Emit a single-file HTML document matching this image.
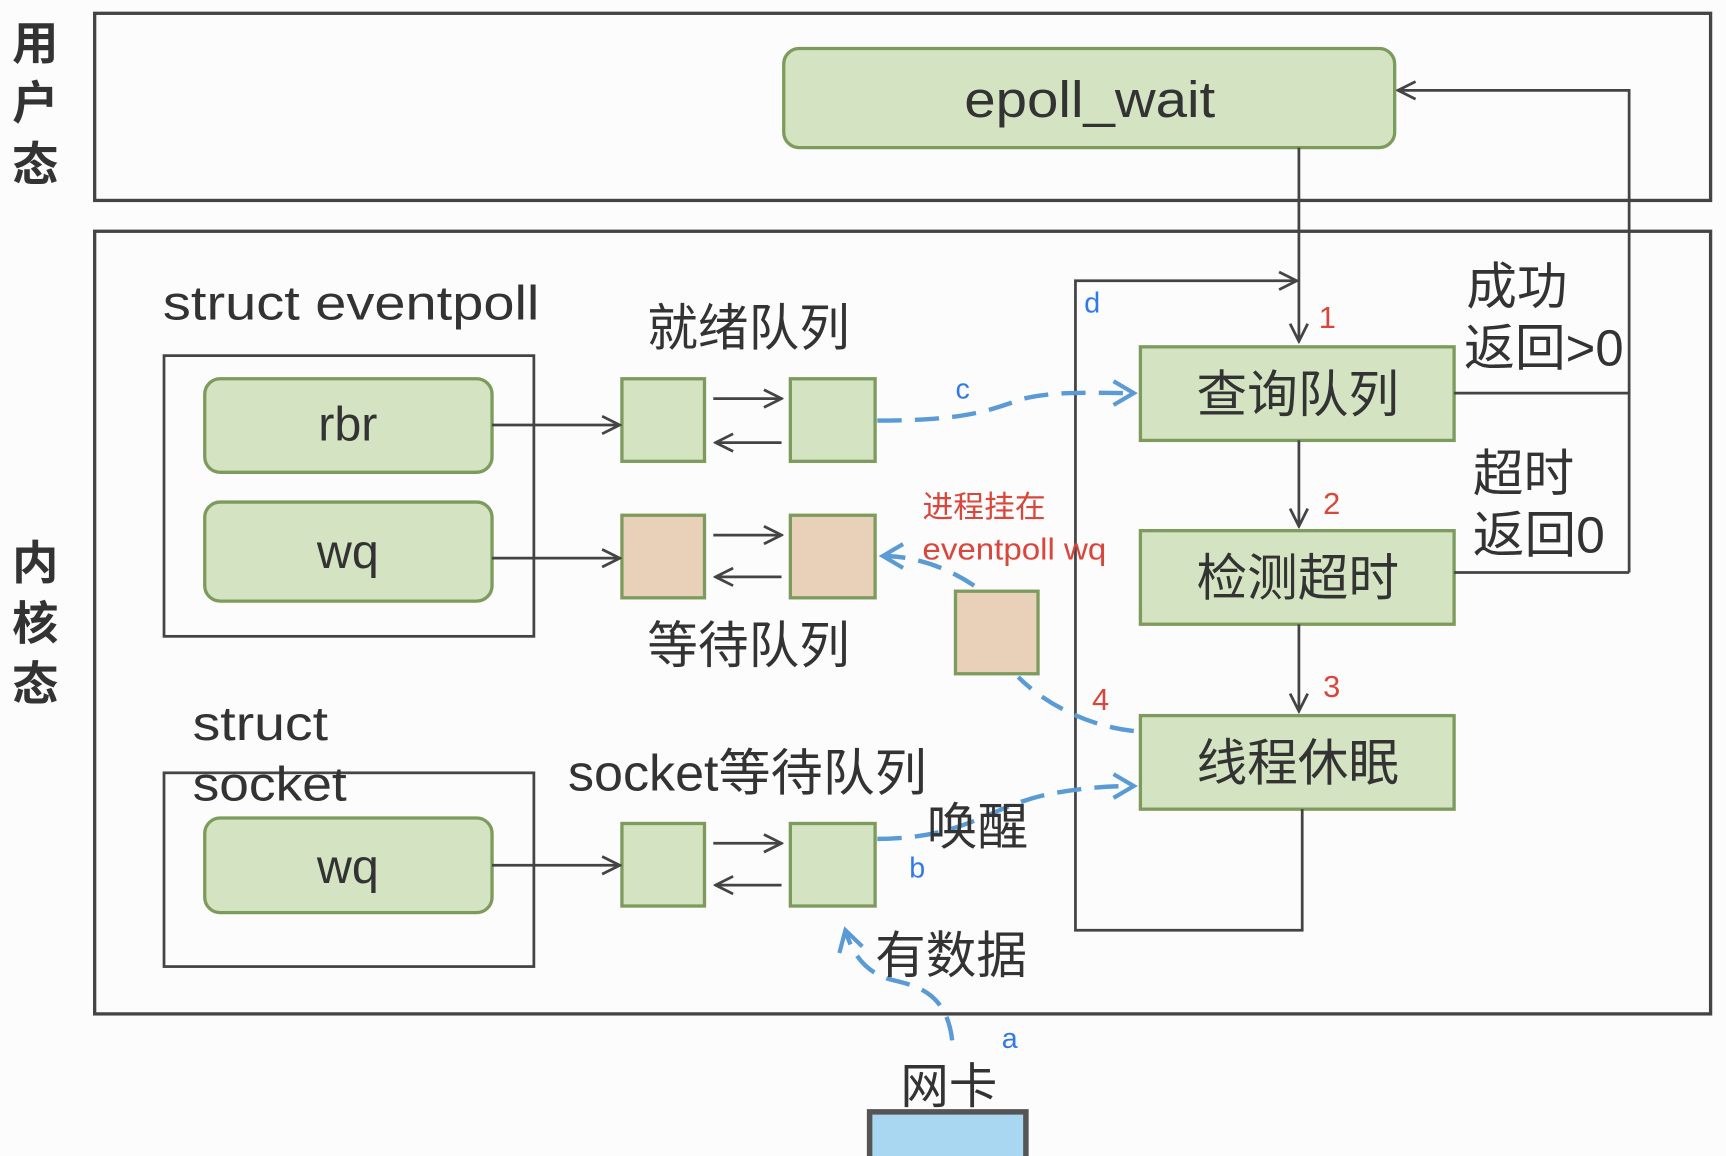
<!DOCTYPE html>
<html><head><meta charset="utf-8"><style>
html,body{margin:0;padding:0;background:#fcfcfc;}
svg{display:block}
text{font-family:"Liberation Sans","Noto Sans CJK SC",sans-serif;fill:#333}
</style></head><body>
<svg width="1726" height="1156" viewBox="0 0 1568 1050" xmlns="http://www.w3.org/2000/svg">
<defs>
<marker id="ah" viewBox="0 0 20 20" refX="18" refY="10" markerWidth="20" markerHeight="20" markerUnits="userSpaceOnUse" orient="auto"><path d="M2,2 L18,10 L2,18" fill="none" stroke="#444" stroke-width="2.5"/></marker>
<marker id="bh" viewBox="0 0 24 24" refX="20" refY="12" markerWidth="26" markerHeight="26" markerUnits="userSpaceOnUse" orient="auto"><path d="M3,2 L20,12 L3,22" fill="none" stroke="#5b9bd5" stroke-width="3.5"/></marker>
</defs>
<rect width="1568" height="1050" fill="#fcfcfc"/>
<g font-weight="bold" font-size="42" text-anchor="middle">
<text x="32" y="54">用</text><text x="32" y="108">户</text><text x="32" y="164">态</text>
<text x="32" y="526">内</text><text x="32" y="581">核</text><text x="32" y="636">态</text>
</g>
<g fill="none" stroke="#444" stroke-width="3">
<rect x="86" y="12" width="1468" height="170"/>
<rect x="86" y="210" width="1468" height="711"/>
<rect x="149" y="323" width="336" height="255" stroke-width="2.5"/>
<rect x="149" y="702" width="336" height="176" stroke-width="2.5"/>
</g>
<g fill="#d4e3c1" stroke="#7d9b5c" stroke-width="3">
<rect x="712" y="44" width="555" height="90" rx="14"/>
<rect x="186" y="344" width="261" height="85" rx="14"/>
<rect x="186" y="456" width="261" height="90" rx="14"/>
<rect x="186" y="743" width="261" height="86" rx="14"/>
<rect x="1036" y="315" width="285" height="85"/>
<rect x="1036" y="482" width="285" height="85"/>
<rect x="1036" y="650" width="285" height="85"/>
<rect x="565" y="344" width="75" height="75"/>
<rect x="718" y="344" width="77" height="75"/>
<rect x="565" y="748" width="75" height="75"/>
<rect x="718" y="748" width="77" height="75"/>
</g>
<g fill="#e8d1b8" stroke="#7d9b5c" stroke-width="3">
<rect x="565" y="468" width="75" height="75"/>
<rect x="718" y="468" width="77" height="75"/>
<rect x="868" y="537" width="75" height="75"/>
</g>
<g fill="none" stroke="#444" stroke-width="2.5">
<path d="M1180,134 V310" marker-end="url(#ah)"/>
<path d="M1180,400 V478" marker-end="url(#ah)"/>
<path d="M1180,567 V646" marker-end="url(#ah)"/>
<path d="M1321,357 H1480 M1321,520 H1480 M1480,520 V82 H1270" marker-end="url(#ah)"/>
<path d="M1183,735 V845 H977 V255 H1178" marker-end="url(#ah)"/>
<path d="M447,386 H563" marker-end="url(#ah)"/>
<path d="M447,507 H563" marker-end="url(#ah)"/>
<path d="M447,786 H563" marker-end="url(#ah)"/>
<path d="M648,362 H710" marker-end="url(#ah)"/><path d="M710,402 H650" marker-end="url(#ah)"/>
<path d="M648,486 H710" marker-end="url(#ah)"/><path d="M710,524 H650" marker-end="url(#ah)"/>
<path d="M648,766 H710" marker-end="url(#ah)"/><path d="M710,804 H650" marker-end="url(#ah)"/>
</g>
<g fill="none" stroke="#5b9bd5" stroke-width="4" stroke-dasharray="22,12">
<path d="M797,382 C880,382 900,372 930,362 C960,355 990,357 1030,357" marker-end="url(#bh)"/>
<path d="M797,762 C880,762 900,730 960,720 C990,715 1010,714 1030,714" marker-end="url(#bh)"/>
<path d="M865,945 C860,900 830,895 810,890 C790,885 775,870 768,845" marker-end="url(#bh)"/>
<path d="M1030,664 C990,660 950,640 925,615"/>
<path d="M885,532 C860,515 830,505 802,505" marker-end="url(#bh)"/>
</g>
<rect x="790" y="1010" width="142" height="45" fill="#a9d6f0" stroke="#555" stroke-width="5"/>
<text x="876" y="106" font-size="46" textLength="228" lengthAdjust="spacingAndGlyphs" fill="#444">epoll_wait</text>
<g font-size="44"><text x="148" y="290" textLength="342" lengthAdjust="spacingAndGlyphs">struct eventpoll</text>
<text x="316" y="400" text-anchor="middle">rbr</text>
<text x="316" y="516" text-anchor="middle">wq</text>
<text x="316" y="802" text-anchor="middle">wq</text>
<text x="175" y="672" textLength="123" lengthAdjust="spacingAndGlyphs">struct</text><text x="175" y="727" textLength="140" lengthAdjust="spacingAndGlyphs">socket</text>
<text x="516" y="718" font-size="46" textLength="326" lengthAdjust="spacingAndGlyphs">socket等待队列</text></g>
<g font-size="46">
<text x="588" y="314">就绪队列</text><text x="588" y="602">等待队列</text>
<text x="1179" y="374" text-anchor="middle">查询队列</text>
<text x="1179" y="541" text-anchor="middle">检测超时</text>
<text x="1179" y="709" text-anchor="middle">线程休眠</text>
<text x="1332" y="276">成功</text><text x="1330" y="332" textLength="145" lengthAdjust="spacingAndGlyphs">返回&gt;0</text>
<text x="1338" y="446">超时</text><text x="1338" y="502" textLength="120" lengthAdjust="spacingAndGlyphs">返回0</text>
<text x="842" y="767">唤醒</text><text x="795" y="884">有数据</text><text x="818" y="1002" font-size="44">网卡</text>
</g>
<g font-size="26" fill="#2f7ae5">
<text x="868" y="362" style="fill:#2f7ae5">c</text><text x="985" y="284" style="fill:#2f7ae5">d</text>
<text x="826" y="797" style="fill:#2f7ae5">b</text><text x="910" y="952" style="fill:#2f7ae5">a</text>
</g>
<g font-size="28" style="fill:#d9463b">
<text x="1198" y="298" style="fill:#d9463b">1</text><text x="1202" y="467" style="fill:#d9463b">2</text>
<text x="1202" y="633" style="fill:#d9463b">3</text><text x="992" y="645" style="fill:#d9463b">4</text>
<text x="838" y="470" style="fill:#d9463b">进程挂在</text><text x="838" y="508" textLength="167" lengthAdjust="spacingAndGlyphs" style="fill:#d9463b">eventpoll wq</text>
</g>
</svg>
</body></html>
